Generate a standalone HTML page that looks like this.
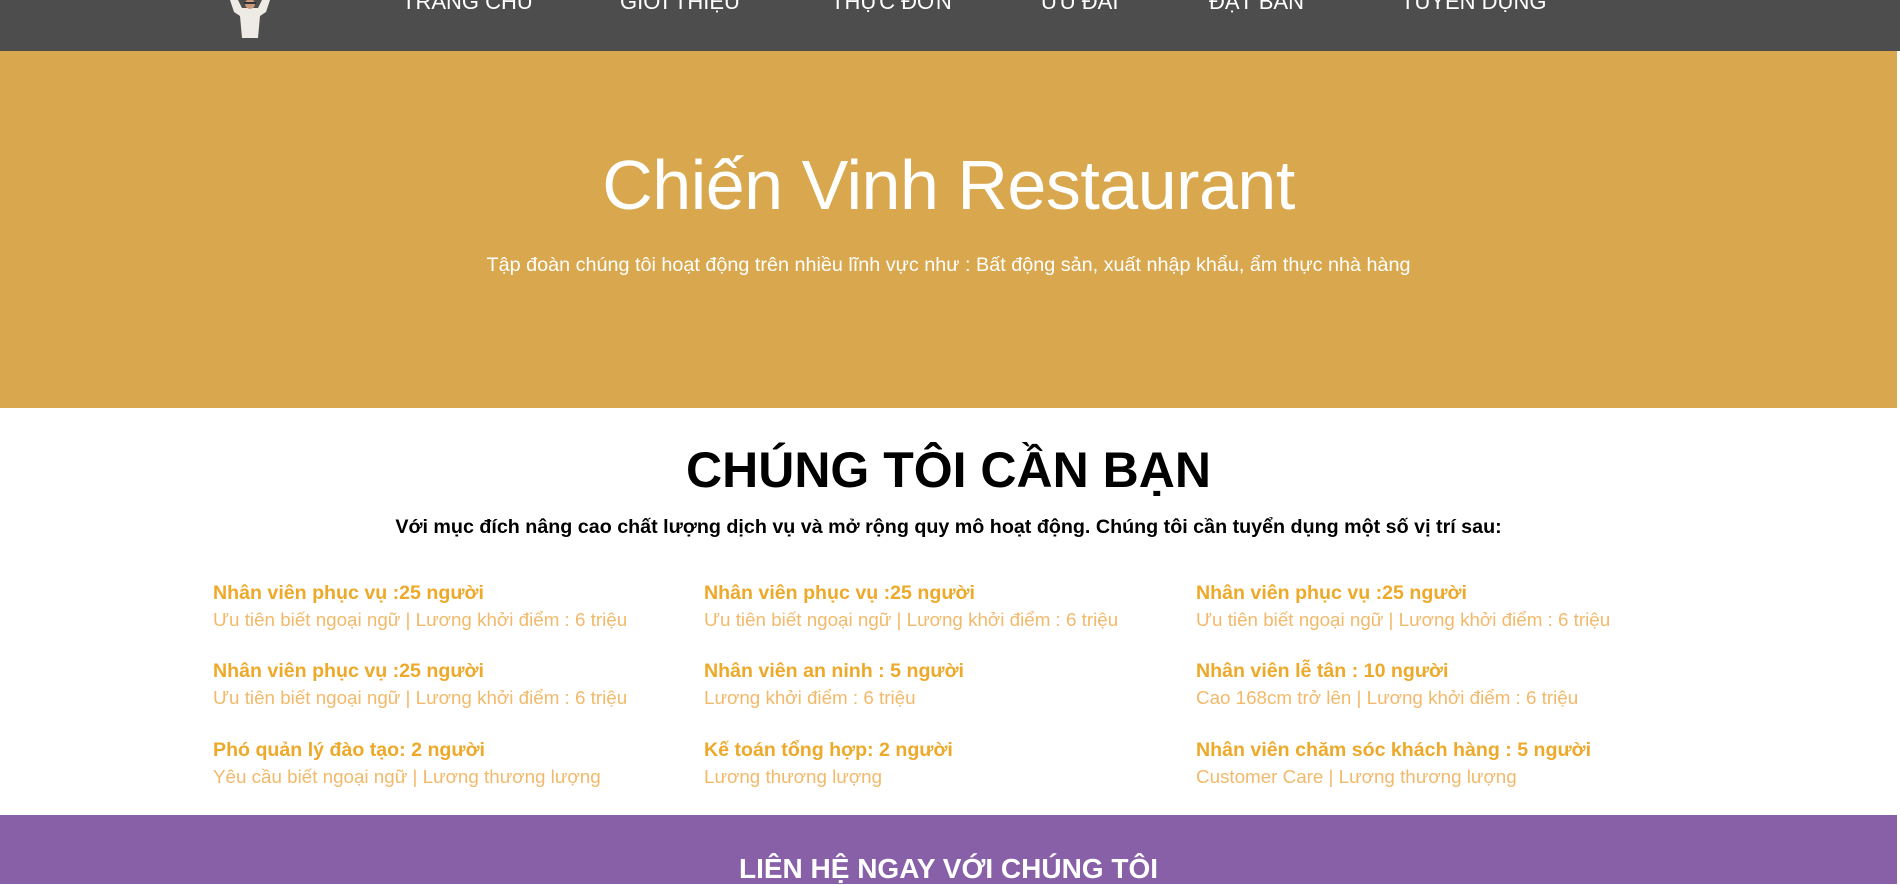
<!DOCTYPE html>
<html><head><meta charset="utf-8"><style>
*{margin:0;padding:0;box-sizing:border-box}
body{width:1900px;height:884px;overflow:hidden;background:#fff;font-family:"Liberation Sans","DejaVu Sans",sans-serif;position:relative}
.nav{position:absolute;left:0;top:0;width:1900px;height:51px;background:#4d4d4d}
.nav span{position:absolute;top:-10px;color:#fff;font-size:22px;line-height:24px;white-space:nowrap}
.hero{position:absolute;left:0;top:51px;width:1897px;height:357px;background:#d9a84e;color:#fff;text-align:center}
.hero h1{position:absolute;left:0;right:0;top:89px;font-size:70px;font-weight:normal;line-height:90px;letter-spacing:-0.5px}
.hero p{position:absolute;left:0;right:0;top:203px;font-size:19.8px}
h2{position:absolute;left:0;width:1897px;top:440px;text-align:center;font-size:50px;font-weight:bold;line-height:60px}
.sub{position:absolute;left:0;width:1897px;top:516px;text-align:center;font-size:19.7px;font-weight:bold}
.it{position:absolute;white-space:nowrap}
.it b{display:block;color:#eda92a;font-size:19.6px;line-height:24px}
.it i{display:block;font-style:normal;color:#f2b96a;font-size:18.8px;line-height:30px}
.foot{position:absolute;left:0;top:815px;width:1897px;height:69px;background:#8760a8;color:#fff;text-align:center;font-weight:bold;font-size:28px;padding-top:38px}
</style></head><body>
<div class="nav">
<svg style="position:absolute;left:222px;top:0" width="54" height="40" viewBox="0 0 54 40"><path d="M8 0 L12 12 L18 16 L20 38 L36 38 L38 16 L44 12 L48 0 L40 0 L36 8 L20 8 L16 0Z" fill="#eeeae4"/><circle cx="28" cy="4" r="5" fill="#c99a78"/><path d="M22 3 h12" stroke="#333" stroke-width="2"/></svg>
<span style="left:402px">TRANG CHỦ</span>
<span style="left:620px">GIỚI THIỆU</span>
<span style="left:831px">THỰC ĐƠN</span>
<span style="left:1041px">ƯU ĐÃI</span>
<span style="left:1209px">ĐẶT BÀN</span>
<span style="left:1401px">TUYỂN DỤNG</span>
</div>
<div class="hero"><h1>Chiến Vinh Restaurant</h1><p>Tập đoàn chúng tôi hoạt động trên nhiều lĩnh vực như : Bất động sản, xuất nhập khẩu, ẩm thực nhà hàng</p></div>
<h2>CHÚNG TÔI CẦN BẠN</h2>
<div class="sub">Với mục đích nâng cao chất lượng dịch vụ và mở rộng quy mô hoạt động. Chúng tôi cần tuyển dụng một số vị trí sau:</div>
<div class="it" style="left:213px;top:581px"><b>Nhân viên phục vụ :25 người</b><i>Ưu tiên biết ngoại ngữ | Lương khởi điểm : 6 triệu</i></div>
<div class="it" style="left:704px;top:581px"><b>Nhân viên phục vụ :25 người</b><i>Ưu tiên biết ngoại ngữ | Lương khởi điểm : 6 triệu</i></div>
<div class="it" style="left:1196px;top:581px"><b>Nhân viên phục vụ :25 người</b><i>Ưu tiên biết ngoại ngữ | Lương khởi điểm : 6 triệu</i></div>
<div class="it" style="left:213px;top:659px"><b>Nhân viên phục vụ :25 người</b><i>Ưu tiên biết ngoại ngữ | Lương khởi điểm : 6 triệu</i></div>
<div class="it" style="left:704px;top:659px"><b>Nhân viên an ninh : 5 người</b><i>Lương khởi điểm : 6 triệu</i></div>
<div class="it" style="left:1196px;top:659px"><b>Nhân viên lễ tân : 10 người</b><i>Cao 168cm trở lên | Lương khởi điểm : 6 triệu</i></div>
<div class="it" style="left:213px;top:738px"><b>Phó quản lý đào tạo: 2 người</b><i>Yêu cầu biết ngoại ngữ | Lương thương lượng</i></div>
<div class="it" style="left:704px;top:738px"><b>Kế toán tổng hợp: 2 người</b><i>Lương thương lượng</i></div>
<div class="it" style="left:1196px;top:738px"><b>Nhân viên chăm sóc khách hàng : 5 người</b><i>Customer Care | Lương thương lượng</i></div>
<div class="foot">LIÊN HỆ NGAY VỚI CHÚNG TÔI</div>
</body></html>
